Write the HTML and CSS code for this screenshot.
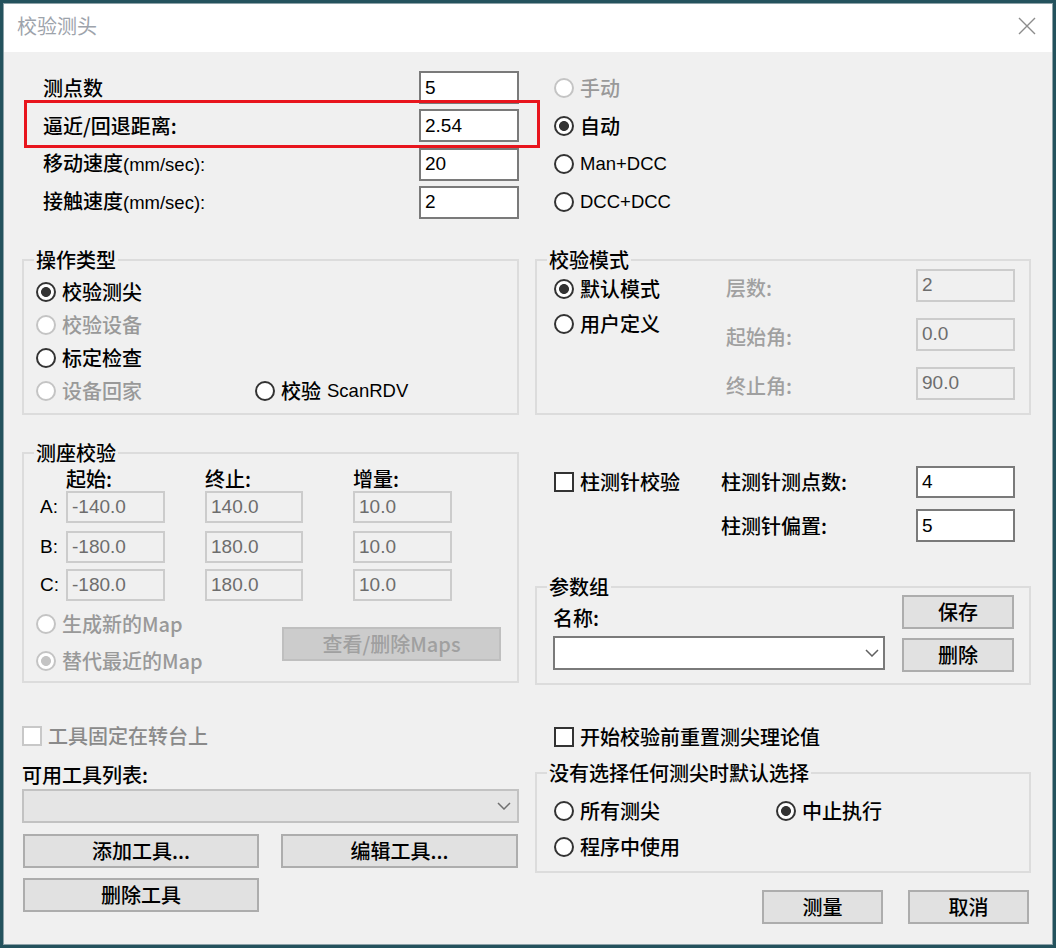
FILE: index.html
```html
<!DOCTYPE html>
<html lang="zh-CN">
<head>
<meta charset="utf-8">
<title>校验测头</title>
<link rel="stylesheet" href="styles.css">
</head>
<body>
<div class="window">
  <div class="titlebar">
    <span class="title">校验测头</span>
    <svg class="close" width="18" height="18" viewBox="0 0 18 18"><path d="M1 1L17 17M17 1L1 17" stroke="#8c8c8c" stroke-width="1.4" fill="none"/></svg>
  </div>
  <div class="client">
    <div class="row row-a">
      <div class="params">
        <span class="lbl">测点数</span><span class="edit">5</span>
        <span class="lbl">逼近/回退距离:</span><span class="edit">2.54</span>
        <span class="lbl">移动速度<span class="en">(mm/sec):</span></span><span class="edit">20</span>
        <span class="lbl">接触速度<span class="en">(mm/sec):</span></span><span class="edit">2</span>
      </div>
      <div class="modes">
        <span class="radio disabled"><i></i>手动</span>
        <span class="radio checked"><i></i>自动</span>
        <span class="radio"><i></i><span class="en">Man+DCC</span></span>
        <span class="radio"><i></i><span class="en">DCC+DCC</span></span>
      </div>
      <div class="mark"></div>
    </div>

    <div class="row row-b">
      <fieldset class="group g-op">
        <legend>操作类型</legend>
        <div class="op-grid">
          <span class="radio checked full"><i></i>校验测尖</span>
          <span class="radio disabled full"><i></i>校验设备</span>
          <span class="radio full"><i></i>标定检查</span>
          <span class="radio disabled"><i></i>设备回家</span>
          <span class="radio"><i></i>校验 <span class="en">ScanRDV</span></span>
        </div>
      </fieldset>
      <fieldset class="group g-mode">
        <legend>校验模式</legend>
        <div class="mode-grid">
          <div class="mode-radios">
            <span class="radio checked"><i></i>默认模式</span>
            <span class="radio"><i></i>用户定义</span>
          </div>
          <span class="lbl dim">层数:</span><span class="edit off">2</span>
          <span class="lbl dim">起始角:</span><span class="edit off">0.0</span>
          <span class="lbl dim">终止角:</span><span class="edit off">90.0</span>
        </div>
      </fieldset>
    </div>

    <div class="row row-c">
      <fieldset class="group g-head">
        <legend>测座校验</legend>
        <div class="head-body">
          <div class="head-grid">
            <span class="hd c2">起始:</span><span class="hd c4">终止:</span><span class="hd c6">增量:</span>
            <span class="axis">A:</span><span class="edit off c2">-140.0</span><span class="edit off c4">140.0</span><span class="edit off c6">10.0</span>
            <span class="axis">B:</span><span class="edit off c2">-180.0</span><span class="edit off c4">180.0</span><span class="edit off c6">10.0</span>
            <span class="axis">C:</span><span class="edit off c2">-180.0</span><span class="edit off c4">180.0</span><span class="edit off c6">10.0</span>
          </div>
          <div class="maps">
            <div class="map-radios">
              <span class="radio disabled"><i></i>生成新的Map</span>
              <span class="radio disabled checked"><i></i>替代最近的Map</span>
            </div>
            <span class="btn off">查看/删除Maps</span>
          </div>
        </div>
      </fieldset>
      <div class="c-right">
        <div class="stylus">
          <span class="check"><i></i>柱测针校验</span>
          <span class="lbl">柱测针测点数:</span><span class="edit">4</span>
          <span class="lbl">柱测针偏置:</span><span class="edit">5</span>
        </div>
        <fieldset class="group g-param">
          <legend>参数组</legend>
          <div class="param-grid">
            <div class="param-left">
              <span class="lbl">名称:</span>
              <div class="combo"><svg width="14" height="8" viewBox="0 0 14 8"><path d="M1 1L7 7L13 1" stroke="#606060" stroke-width="1.5" fill="none"/></svg></div>
            </div>
            <div class="param-right">
              <span class="btn">保存</span>
              <span class="btn">删除</span>
            </div>
          </div>
        </fieldset>
      </div>
    </div>

    <div class="row row-d">
      <div class="tools">
        <span class="check disabled"><i></i>工具固定在转台上</span>
        <span class="lbl tl">可用工具列表:</span>
        <div class="combo off"><svg width="14" height="8" viewBox="0 0 14 8"><path d="M1 1L7 7L13 1" stroke="#707070" stroke-width="1.5" fill="none"/></svg></div>
        <div class="tool-btns">
          <span class="btn">添加工具...</span>
          <span class="btn">编辑工具...</span>
          <span class="btn">删除工具</span>
        </div>
      </div>
      <div class="right-d">
        <span class="check"><i></i>开始校验前重置测尖理论值</span>
        <fieldset class="group g-def">
          <legend>没有选择任何测尖时默认选择</legend>
          <div class="def-grid">
            <span class="radio"><i></i>所有测尖</span>
            <span class="radio checked"><i></i>中止执行</span>
            <span class="radio"><i></i>程序中使用</span>
          </div>
        </fieldset>
        <div class="actions">
          <span class="btn">测量</span>
          <span class="btn">取消</span>
        </div>
      </div>
    </div>
  </div>
</div>
</body>
</html>
```

FILE: styles.css
```css
* { box-sizing: border-box; }
html, body { margin: 0; padding: 0; }
body {
  width: 1056px;
  height: 948px;
  overflow: hidden;
  background: #24525d;
  font-family: "Noto Sans CJK SC", "Noto Sans", sans-serif;
  font-size: 20px;
  font-weight: 500;
  line-height: 22px;
  color: #000;
}
.en {
  font-family: "Liberation Sans", "Noto Sans", sans-serif;
  font-size: 18.5px;
  font-weight: 400;
}
.window {
  margin: 3px 0 0 3px;
  width: 1050px;
  height: 942px;
  border: 1px solid #8da2a8;
  background: #f0f0f0;
}
.titlebar {
  height: 48px;
  background: #fff;
  display: flex;
  align-items: center;
  justify-content: space-between;
  padding: 0 16px 4px 13px;
}
.title { color: #9da3ab; font-weight: 400; }
.close { display: block; }

.client { padding-left: 18px; }
.row {
  display: grid;
  grid-template-columns: 497px 496px;
  column-gap: 16px;
  align-items: start;
}
.row-a { margin-top: 19px; height: 148px; position: relative; }
.params {
  display: grid;
  grid-template-columns: 1fr 100px;
  grid-template-rows: repeat(4, 33px);
  row-gap: 5.33px;
  padding-left: 21px;
  align-items: center;
}
.modes {
  display: grid;
  grid-template-rows: repeat(4, 33px);
  row-gap: 5.33px;
  padding-left: 19px;
}
.mark {
  position: absolute;
  left: 2px;
  top: 29px;
  width: 516px;
  height: 48px;
  border: 3px solid #e8151d;
}

.lbl { white-space: nowrap; }
.lbl.dim { color: #a0a0a0; }

.edit {
  display: flex;
  align-items: center;
  height: 33px;
  padding: 0 4px;
  border: 2px solid #7a7a7a;
  background: #fff;
  white-space: nowrap;
  font-family: "Liberation Sans", "Noto Sans", sans-serif;
  font-size: 19px;
  font-weight: 400;
}
.edit.off {
  border-color: #cccccc;
  background: #f0f0f0;
  color: #6d6d6d;
}

.radio {
  display: flex;
  align-items: center;
  gap: 6px;
  height: 33px;
  white-space: nowrap;
}
.radio i {
  flex: none;
  width: 20px;
  height: 20px;
  border: 2px solid #333;
  border-radius: 50%;
  background: #fff;
}
.radio.checked i { background: radial-gradient(circle, #333 0 4.6px, #fff 5.3px); }
.radio.disabled { color: #999; }
.radio.disabled i { border-color: #c4c4c4; }
.radio.disabled.checked i { background: radial-gradient(circle, #c4c4c4 0 4.6px, #fff 5.3px); }

.check {
  display: flex;
  align-items: center;
  gap: 6px;
  height: 22px;
  white-space: nowrap;
}
.check i {
  flex: none;
  width: 20px;
  height: 20px;
  border: 2px solid #333;
  background: #fff;
}
.check.disabled { color: #8a8a8a; }
.check.disabled i { border-color: #c8c8c8; }

.btn {
  display: flex;
  align-items: center;
  justify-content: center;
  height: 34px;
  background: #e1e1e1;
  border: 2px solid #adadad;
  white-space: nowrap;
}
.btn.off {
  background: #cccccc;
  border-color: #bfbfbf;
  color: #a0a0a0;
}

.combo {
  display: flex;
  align-items: center;
  justify-content: flex-end;
  height: 34px;
  padding-right: 4px;
  border: 2px solid #7a7a7a;
  background: #fff;
}
.combo.off {
  align-self: stretch;
  margin-top: 3px;
  padding-right: 6px;
  background: #e5e5e5;
  border-color: #c2c2c2;
}

/* group boxes */
.group {
  margin: 0;
  padding: 0;
  min-width: 0;
  border: 2px solid #dcdcdc;
}
.group legend {
  margin-left: 10px;
  padding: 0 2px;
  line-height: 22px;
  white-space: nowrap;
}

.row-b { margin-top: 30px; }
.g-op, .g-mode { height: 166px; }
.op-grid {
  display: grid;
  grid-template-columns: 219px auto;
  grid-template-rows: repeat(4, 33.3px);
  padding: 4px 0 0 12px;
}
.op-grid .full { grid-column: 1 / -1; }

.mode-grid {
  display: grid;
  grid-template-columns: 172px 190px 99px;
  grid-template-rows: 32px 32px 32px;
  row-gap: 17px;
  margin-top: -2px;
  padding-left: 17px;
  align-items: center;
}
.mode-radios {
  grid-column: 1;
  grid-row: 1 / 4;
  align-self: start;
  display: flex;
  flex-direction: column;
  gap: 2px;
  padding-top: 3.5px;
}
.mode-grid .lbl { grid-column: 2; padding-top: 5px; }
.mode-grid .edit { grid-column: 3; height: 33px; }

.row-c { margin-top: 27px; }
.g-head { height: 241px; }
.head-body { padding-left: 12px; }
.head-grid {
  display: grid;
  margin-left: 4px;
  grid-template-columns: 26px 99px 40px 98px 50px 99px;
  grid-template-rows: 27px 40px 38px 32px;
  align-items: start;
}
.head-grid .c2 { grid-column: 2; }
.head-grid .c4 { grid-column: 4; }
.head-grid .c6 { grid-column: 6; }
.head-grid .hd { align-self: end; margin-bottom: 1px; }
.head-grid .edit { height: 32px; }
.axis {
  grid-column: 1;
  display: flex;
  align-items: center;
  height: 32px;
  font-family: "Liberation Sans", "Noto Sans", sans-serif;
  font-size: 19px;
  font-weight: 400;
}
.maps { display: flex; margin-top: 6.5px; }
.map-radios {
  width: 246px;
  display: flex;
  flex-direction: column;
  gap: 4px;
}
.maps .btn { margin-top: 19.5px; width: 219px; }

.c-right { display: flex; flex-direction: column; }
.stylus {
  display: grid;
  grid-template-columns: 167px 195px 99px;
  grid-template-rows: 32px 33px;
  row-gap: 11px;
  margin: 24px 0 0 19px;
  align-items: center;
}
.stylus .check { grid-column: 1; }
.stylus .lbl { grid-column: 2; }
.stylus .edit { grid-column: 3; height: 100%; }

.g-param { margin-top: 34px; height: 109px; }
.param-grid {
  display: grid;
  grid-template-columns: 332px 112px;
  column-gap: 17px;
  padding-left: 16px;
}
.param-left { display: flex; flex-direction: column; }
.param-left .lbl { margin-top: 9px; }
.param-left .combo { margin-top: 7px; height: 34px; }
.param-right { display: flex; flex-direction: column; }
.param-right .btn:first-child { margin-top: -3px; }
.param-right .btn + .btn { margin-top: 9px; }

.tools { display: flex; flex-direction: column; align-items: flex-start; }
.tools .check { margin-top: 40px; }
.tools .tl { margin-top: 17px; }
.tool-btns {
  display: grid;
  grid-template-columns: 236px 237px;
  column-gap: 22px;
  row-gap: 10px;
  margin: 11px 0 0 1px;
}

.right-d { display: flex; flex-direction: column; }
.right-d .check { margin: 41px 0 0 19px; }
.g-def { margin-top: 14px; height: 111px; }
.def-grid {
  display: grid;
  grid-template-columns: 222px auto;
  grid-template-rows: 33px 33px;
  row-gap: 3px;
  padding: 10.5px 0 0 17px;
}
.actions {
  display: flex;
  justify-content: flex-end;
  gap: 25px;
  padding-right: 2px;
  margin-top: 17px;
}
.actions .btn { width: 121px; }
```
